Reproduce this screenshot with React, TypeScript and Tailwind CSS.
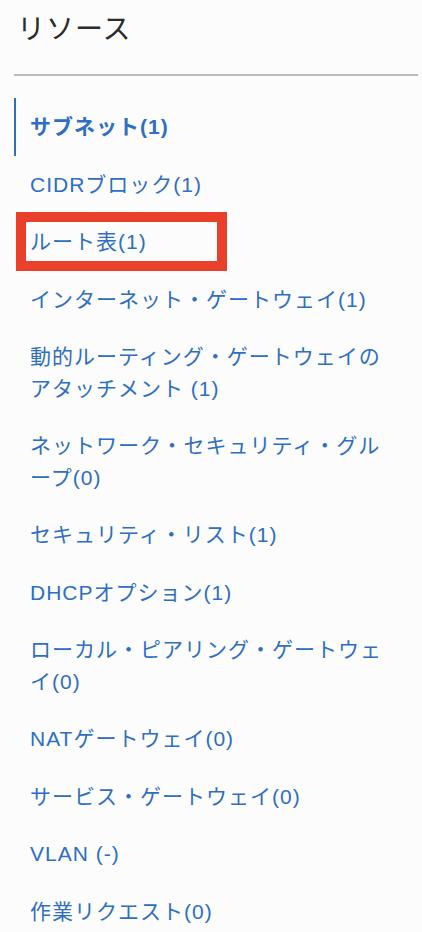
import React from 'react';

type Resource = {
  label: string;
  active?: boolean;
  highlighted?: boolean;
};

const resources: Resource[] = [
  { label: 'サブネット(1)', active: true },
  { label: 'CIDRブロック(1)' },
  { label: 'ルート表(1)', highlighted: true },
  { label: 'インターネット・ゲートウェイ(1)' },
  { label: '動的ルーティング・ゲートウェイのアタッチメント (1)' },
  { label: 'ネットワーク・セキュリティ・グループ(0)' },
  { label: 'セキュリティ・リスト(1)' },
  { label: 'DHCPオプション(1)' },
  { label: 'ローカル・ピアリング・ゲートウェイ(0)' },
  { label: 'NATゲートウェイ(0)' },
  { label: 'サービス・ゲートウェイ(0)' },
  { label: 'VLAN (-)' },
  { label: '作業リクエスト(0)' },
];

export default function App() {
  return (
    <div
      className="min-h-[932px] w-[422px] overflow-hidden bg-[#fcfcfc]"
      style={{ fontFamily: '"Liberation Sans", "Noto Sans CJK JP", sans-serif' }}
    >
      <div className="pl-[14px] pr-[4px]">
        {/* Header */}
        <h2 className="pl-[3px] pt-[10px] pb-[24px] text-[28px] leading-[40px] tracking-[1px] text-[#2b2b2b]">
          リソース
        </h2>
        <div className="h-[2px] bg-[#b7babe]" />

        {/* Resource list */}
        <ul className="mt-[22px]">
          {resources.map((r) => (
            <li key={r.label} className="relative">
              <a
                href="#"
                className={`block border-l-2 py-[13px] pl-[14px] pr-[30px] text-[21px] leading-[31.5px] tracking-[1px] text-[#2e6ec4] ${
                  r.active ? 'border-[#2e6ec4] font-bold' : 'border-transparent'
                }`}
              >
                {r.label}
              </a>
              {r.highlighted && (
                <div className="pointer-events-none absolute left-[2px] top-[-1px] h-[59px] w-[211px] border-[10px] border-[#e8402a]" />
              )}
            </li>
          ))}
        </ul>
      </div>
    </div>
  );
}
